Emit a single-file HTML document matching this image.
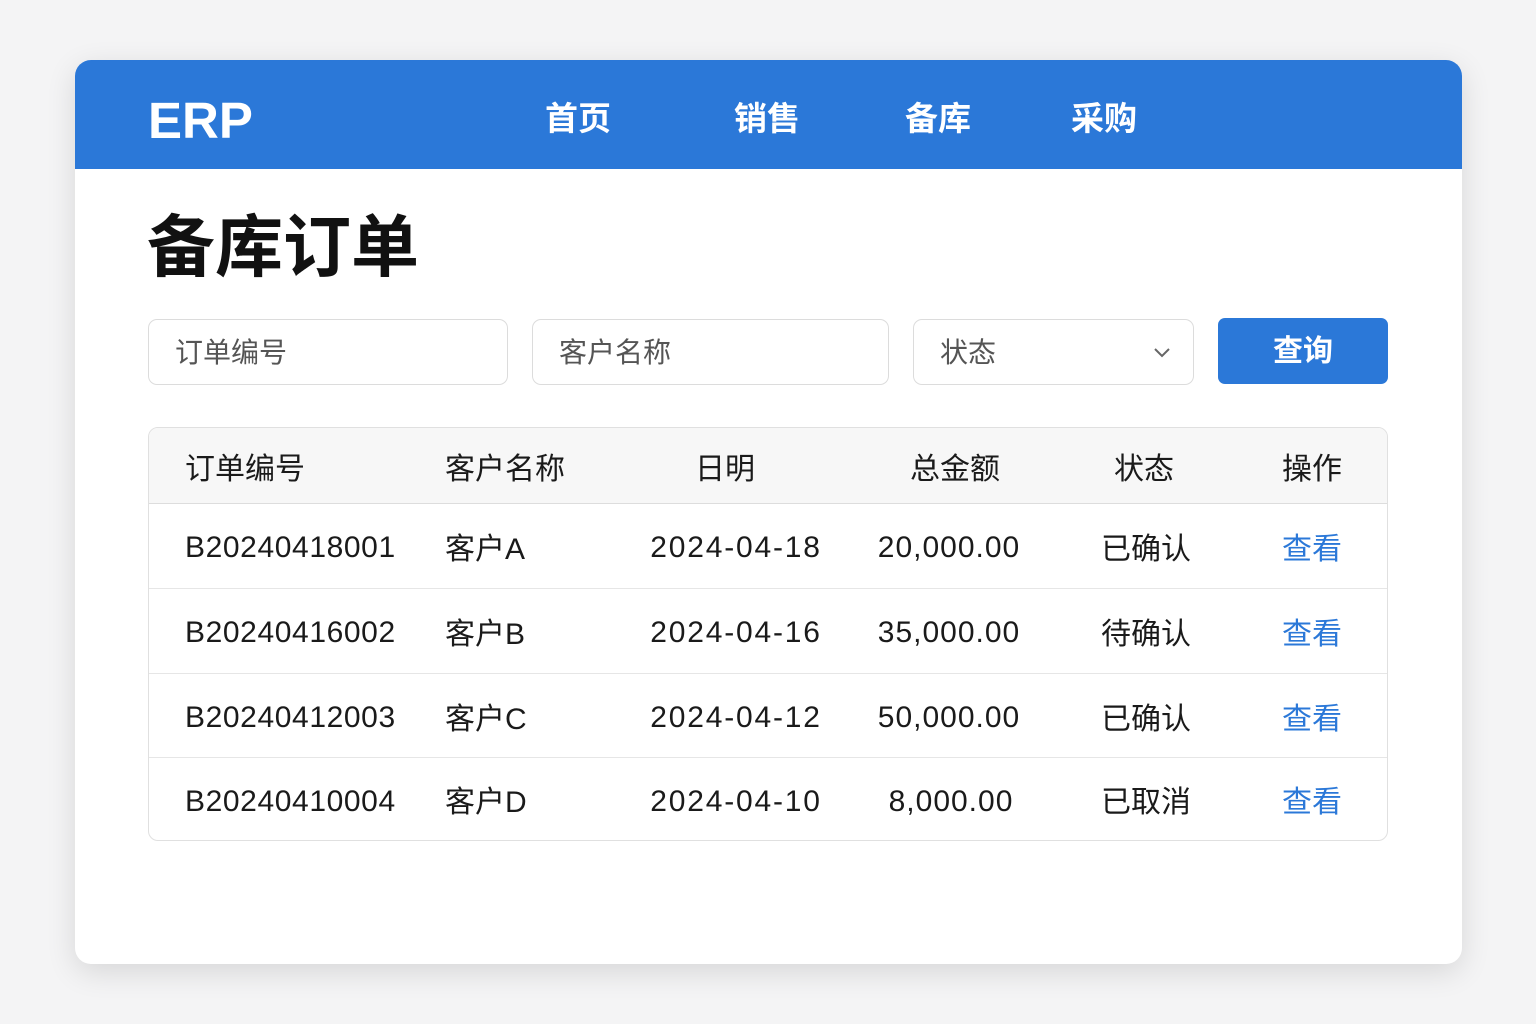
<!DOCTYPE html>
<html><head><meta charset="utf-8"><style>
*{margin:0;padding:0;box-sizing:border-box}
body{width:1536px;height:1024px;background:#f4f4f5;font-family:"Liberation Sans","Noto Sans CJK SC",sans-serif;position:relative;overflow:hidden}
.card{position:absolute;left:75px;top:60px;width:1387px;height:904px;background:#fff;border-radius:16px;box-shadow:0 8px 30px rgba(0,0,0,.12);overflow:hidden}
.hdr{position:absolute;left:0;top:0;width:100%;height:109px;background:#2b78d8}
.a{position:absolute;white-space:nowrap}
.nav{color:#fff;font-size:33px;font-weight:bold;top:32px}
.in{position:absolute;top:259px;height:66px;border:1.5px solid #dcdcdc;border-radius:9px;font-size:28px;color:#555;padding-left:26px;line-height:65px}
.tbl{position:absolute;left:73px;top:367px;width:1240px;height:414px;border:1.5px solid #e0e0e0;border-radius:10px;overflow:hidden}
.th{position:absolute;left:0;top:0;width:100%;height:76px;background:#f7f7f7;border-bottom:1.5px solid #ddd}
.row{position:absolute;left:0;width:100%;border-bottom:1.5px solid #e6e6e6}
.c{position:absolute;font-size:30px;color:#1a1a1a;white-space:nowrap;transform:translateY(-50%)}
.ct{transform:translate(-50%,-50%)}
.lk{color:#2b78d8}
.n{letter-spacing:0.6px;top:44px!important}
.d{letter-spacing:1.8px;top:44px!important}
.m{letter-spacing:1px;top:44px!important}
</style></head><body>
<div class="card">
<div class="hdr">
<div class="a" style="left:73px;top:30px;color:#fff;font-size:51px;font-weight:bold;line-height:62px">ERP</div>
<div class="a nav" style="left:470px">首页</div>
<div class="a nav" style="left:659px">销售</div>
<div class="a nav" style="left:830px">备库</div>
<div class="a nav" style="left:996px">采购</div>
</div>
<div class="a" style="left:72px;top:148px;font-size:68px;font-weight:bold;color:#111;line-height:80px">备库订单</div>
<div class="in" style="left:73px;width:360px">订单编号</div>
<div class="in" style="left:457px;width:357px">客户名称</div>
<div class="in" style="left:838px;width:281px">状态
<svg style="position:absolute;right:22px;top:27px" width="18" height="12" viewBox="0 0 18 12"><path d="M2 2l7 7 7-7" fill="none" stroke="#666" stroke-width="2"/></svg></div>
<div class="a" style="left:1143px;top:258px;width:170px;height:66px;background:#2b78d8;border-radius:7px;color:#fff;font-size:30px;font-weight:bold;text-align:center;line-height:68px">查询</div>
<div class="tbl">
<div class="th">
<div class="c" style="left:36px;top:38px">订单编号</div>
<div class="c" style="left:296px;top:38px">客户名称</div>
<div class="c ct" style="left:576px;top:38px">日明</div>
<div class="c ct" style="left:806px;top:38px">总金额</div>
<div class="c ct" style="left:995px;top:38px">状态</div>
<div class="c ct" style="left:1163px;top:38px">操作</div>
</div>
<div class="row" style="top:76px;height:85px"><div class="c n" style="left:36px;top:42px">B20240418001</div><div class="c" style="left:296px;top:42px">客户A</div><div class="c ct d" style="left:587px;top:42px">2024-04-18</div><div class="c ct m" style="left:800px;top:42px">20,000.00</div><div class="c ct" style="left:997px;top:42px">已确认</div><div class="c ct lk" style="left:1163px;top:42px">查看</div></div>
<div class="row" style="top:161px;height:85px"><div class="c n" style="left:36px;top:42px">B20240416002</div><div class="c" style="left:296px;top:42px">客户B</div><div class="c ct d" style="left:587px;top:42px">2024-04-16</div><div class="c ct m" style="left:800px;top:42px">35,000.00</div><div class="c ct" style="left:997px;top:42px">待确认</div><div class="c ct lk" style="left:1163px;top:42px">查看</div></div>
<div class="row" style="top:246px;height:84px"><div class="c n" style="left:36px;top:42px">B20240412003</div><div class="c" style="left:296px;top:42px">客户C</div><div class="c ct d" style="left:587px;top:42px">2024-04-12</div><div class="c ct m" style="left:800px;top:42px">50,000.00</div><div class="c ct" style="left:997px;top:42px">已确认</div><div class="c ct lk" style="left:1163px;top:42px">查看</div></div>
<div class="row" style="top:330px;height:84px;border:none"><div class="c n" style="left:36px;top:41px">B20240410004</div><div class="c" style="left:296px;top:41px">客户D</div><div class="c ct d" style="left:587px;top:41px">2024-04-10</div><div class="c ct m" style="left:802px;top:41px">8,000.00</div><div class="c ct" style="left:997px;top:41px">已取消</div><div class="c ct lk" style="left:1163px;top:41px">查看</div></div>
</div>
</div>
</body></html>
